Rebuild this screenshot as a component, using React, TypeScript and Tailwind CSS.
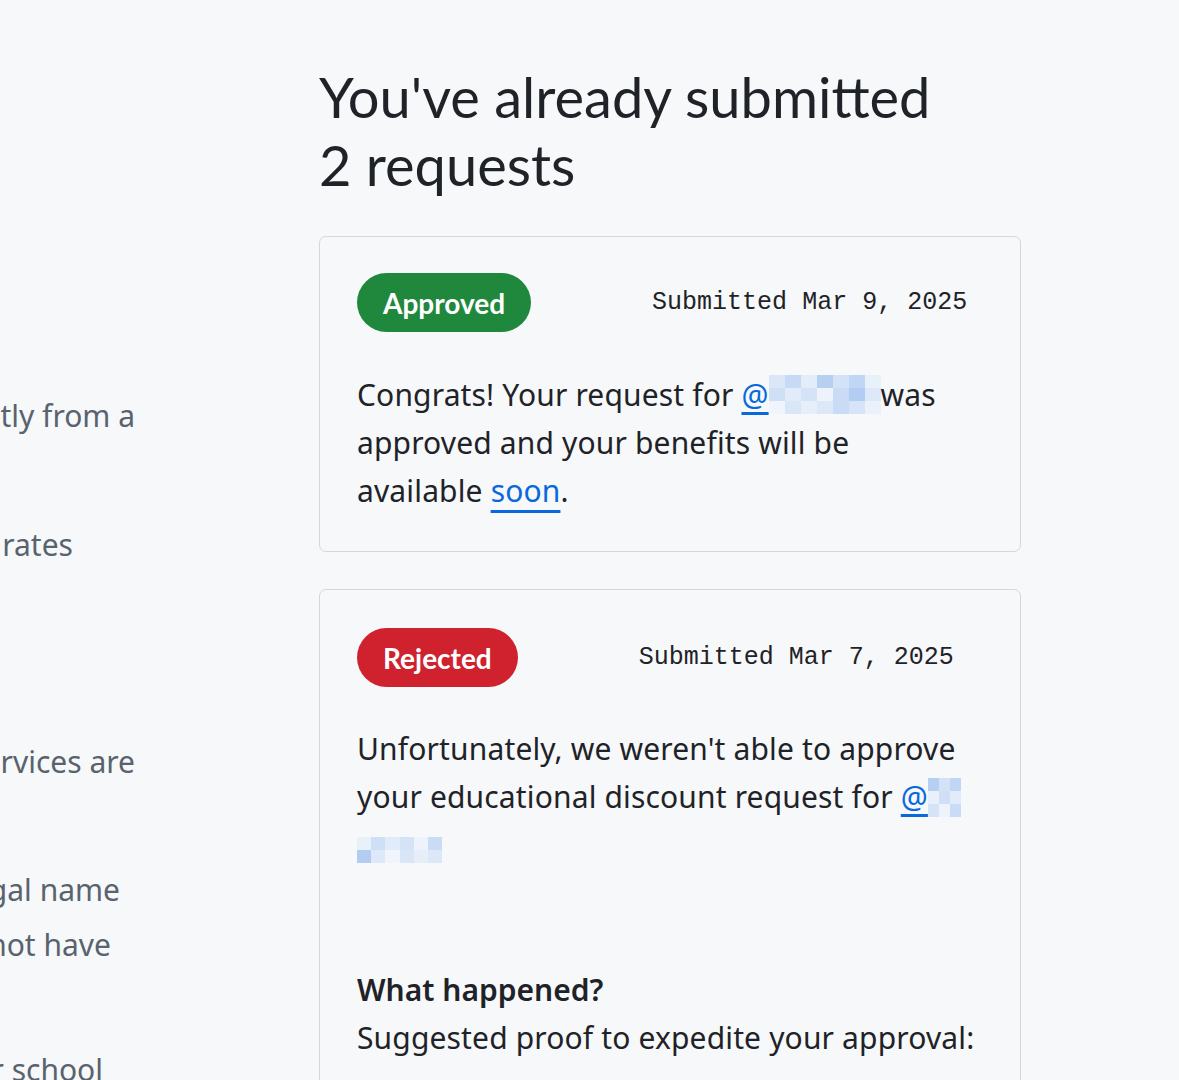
// App.tsx
const title = { fontFamily: "Lato, 'Noto Sans', sans-serif" };
const body = { fontFamily: "'Noto Sans', 'Open Sans', sans-serif" };
const mono = { fontFamily: "'Liberation Mono', 'DejaVu Sans Mono', monospace" };

const blurA = [
  "bg-[#dbe7f8]", "bg-[#c6daf5]", "bg-[#e3ecf9]", "bg-[#b7d0f2]", "bg-[#d3e2f7]", "bg-[#c0d6f4]", "bg-[#e8f0fa]",
  "bg-[#cfdff6]", "bg-[#e1ebf9]", "bg-[#d5e3f7]", "bg-[#eef3fb]", "bg-[#c9dbf5]", "bg-[#b2cdf1]", "bg-[#dde8f8]",
  "bg-[#f0f5fb]", "bg-[#d9e6f8]", "bg-[#e6eef9]", "bg-[#dce7f8]", "bg-[#cadcf5]", "bg-[#d7e4f7]", "bg-[#eaf1fa]",
];

function Blur({ cols, cells, className }: { cols: string; cells: string[]; className: string }) {
  return (
    <span className={`inline-grid align-middle ${cols} ${className}`}>
      {cells.map((c, i) => (
        <span key={i} className={`block h-[13px] ${c}`} />
      ))}
    </span>
  );
}

function Badge({ label, tone }: { label: string; tone: "green" | "red" }) {
  return (
    <span
      className={`inline-flex h-[59px] items-center rounded-full px-[26px] text-[28px] font-bold text-white ${
        tone === "green" ? "bg-[#1f883d]" : "bg-[#cf222e]"
      }`}
      style={title}
    >
      {label}
    </span>
  );
}

function CardHead({ label, tone, date }: { label: string; tone: "green" | "red"; date: string }) {
  return (
    <div className="flex items-center">
      <Badge label={label} tone={tone} />
      <span className="ml-[121px] text-[25px] text-[#1f2328]" style={mono}>
        Submitted {date}
      </span>
    </div>
  );
}

const sideLines = [
  { text: "Accounts must be verified directly from a", cls: "mt-[388px] pr-[1px]" },
  { text: "school that offers discounted rates", cls: "mt-[74px] pr-[63px]" },
  { text: "Some of the partner services are", cls: "mt-[162px] pr-[1px]" },
  { text: "Please use your full legal name", cls: "mt-[73px] pr-[16px]" },
  { text: "if your profile does not have", cls: "pr-[25px]" },
  { text: "proof from your school", cls: "mt-[70px] pr-[33px]" },
];

export default function App() {
  return (
    <div className="flex min-h-screen overflow-hidden bg-[#f6f8fa]" style={body}>
      {/* cut-off left column */}
      <aside className="w-[136px] shrink-0 overflow-hidden text-[30px] text-[#59636e]">
        {sideLines.map((l) => (
          <div key={l.text} className={`flex h-[55px] items-center justify-end whitespace-nowrap ${l.cls}`}>
            {l.text}
          </div>
        ))}
      </aside>

      <main className="ml-[183px] w-[702px] shrink-0 pt-[63px]">
        <h2 className="text-[56px] leading-[68px] text-[#1f2328]" style={title}>
          You've already submitted
          <br />2 requests
        </h2>

        <section className="mt-[37px] rounded-[7px] border border-[#d1d9e0] bg-[#f6f8fa] px-[37px] pt-[36px] pb-[36px]">
          <CardHead label="Approved" tone="green" date="Mar 9, 2025" />
          <p className="mt-[39px] whitespace-nowrap text-[30px] leading-[48px] tracking-[0.15px] text-[#1f2328]">
            Congrats! Your request for{" "}
            <span className="text-[#0969da] underline underline-offset-[6px]">@</span>
            <Blur cols="grid-cols-7" cells={blurA.slice(0, 21)} className="w-[112px] -mt-[6px]" />
            was
            <br />
            approved and your benefits will be
            <br />
            available{" "}
            <a className="text-[#0969da] underline decoration-[#0969da] underline-offset-[8px]" href="#">
              soon
            </a>
            .
          </p>
        </section>

        <section className="mt-[37px] rounded-[7px] border border-[#d1d9e0] bg-[#f6f8fa] px-[37px] pt-[38px] pb-[40px]">
          <CardHead label="Rejected" tone="red" date="Mar 7, 2025" />
          <p className="mt-[38px] whitespace-nowrap text-[30px] leading-[48px] tracking-[0.15px] text-[#1f2328]">
            Unfortunately, we weren't able to approve
            <br />
            your educational discount request for{" "}
            <span className="text-[#0969da] underline underline-offset-[6px]">@</span>
            <Blur cols="grid-cols-3" cells={blurA.slice(3, 12)} className="w-[33px] -mt-[4px]" />
            <br />
            <Blur cols="grid-cols-6" cells={blurA.slice(6, 18)} className="w-[85px] mt-[4px]" />
          </p>
          <h3 className="mt-[97px] text-[30px] font-semibold leading-[48px] text-[#1f2328]">What happened?</h3>
          <p className="whitespace-nowrap text-[30px] leading-[48px] tracking-[0.15px] text-[#1f2328]">
            Suggested proof to expedite your approval:
          </p>
          <div className="h-[80px]" />
        </section>
      </main>
    </div>
  );
}
